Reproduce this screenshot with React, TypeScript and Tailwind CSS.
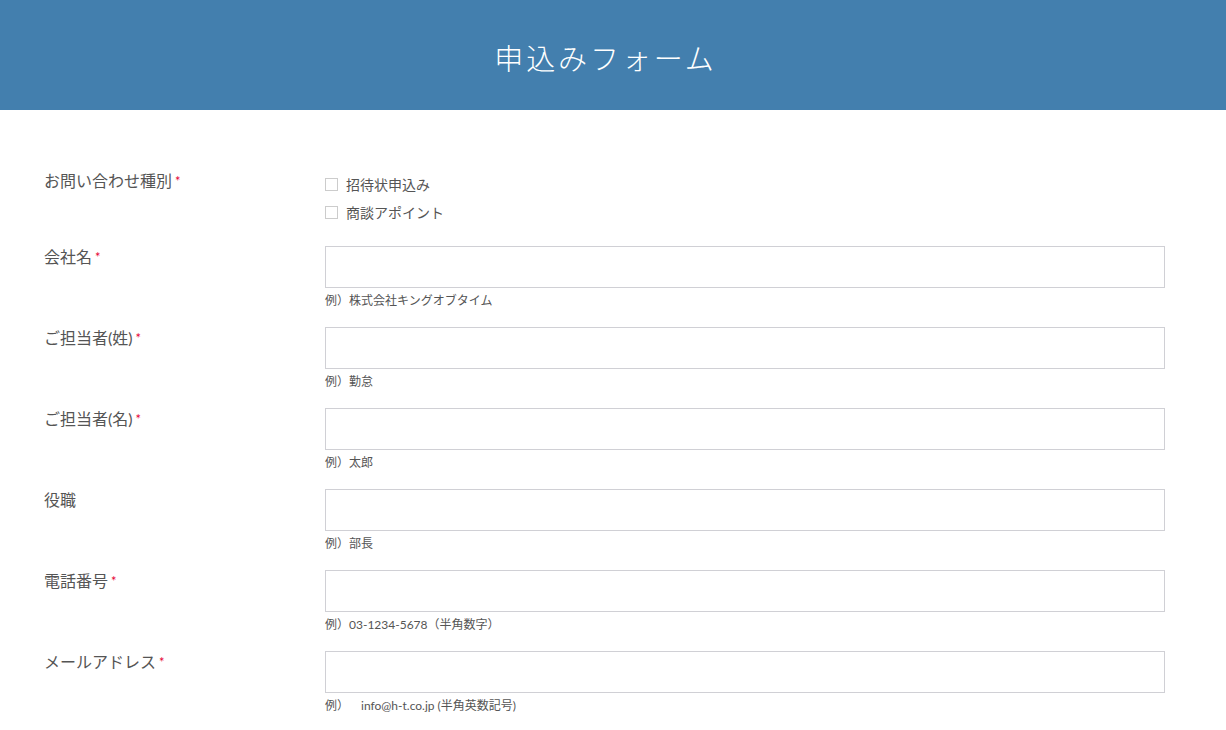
import React from 'react';

const fields = [
  { label: '会社名', required: true, hint: '例）株式会社キングオブタイム' },
  { label: 'ご担当者(姓)', required: true, hint: '例）勤怠' },
  { label: 'ご担当者(名)', required: true, hint: '例）太郎' },
  { label: '役職', required: false, hint: '例）部長' },
  { label: '電話番号', required: true, hint: '例）03-1234-5678（半角数字）' },
];

function Label({ text, required }: { text: string; required: boolean }) {
  return (
    <div className="text-[16px] leading-[22px] text-[#555]">
      {text}
      {required && <span className="ml-[3px] text-[13px] text-[#e60033] align-top">*</span>}
    </div>
  );
}

export default function App() {
  return (
    <div className="min-h-screen bg-white" style={{ fontFamily: 'Lato, "Noto Sans CJK JP", sans-serif' }}>
      {/* header */}
      <header className="h-[110px] bg-[#437fae] flex items-center justify-center pt-[6px] pr-[15px]">
        <h1 className="text-white text-[29px] font-light tracking-[0.1em] leading-none">申込みフォーム</h1>
      </header>

      <div className="pl-[44px] pr-[61px] pt-[60px]">
        {/* type */}
        <div className="grid grid-cols-[281px_1fr] pb-[20px]">
          <Label text="お問い合わせ種別" required />
          <div className="flex flex-col">
            {['招待状申込み', '商談アポイント'].map((opt) => (
              <label key={opt} className="flex items-center gap-[8px] h-[28px] text-[14px] text-[#555]">
                <span className="w-[13px] h-[13px] border border-[#ccc] bg-white" />
                {opt}
              </label>
            ))}
          </div>
        </div>

        {fields.map((f) => (
          <div key={f.label} className="grid grid-cols-[281px_1fr] pb-[17px]">
            <Label text={f.label} required={f.required} />
            <div>
              <input className="block w-full h-[42px] border border-[#d0d0d5] bg-white outline-none" />
              <div className="mt-[4px] text-[12px] leading-[18px] text-[#555]">{f.hint}</div>
            </div>
          </div>
        ))}

        <div className="grid grid-cols-[281px_1fr] pb-[17px]">
          <Label text="メールアドレス" required />
          <div>
            <input className="block w-full h-[42px] border border-[#d0d0d5] bg-white outline-none" />
            <div className="mt-[4px] text-[12px] leading-[18px] text-[#555]">
              例）<span className="ml-[12px]">info@h-t.co.jp (半角英数記号)</span>
            </div>
          </div>
        </div>
      </div>
    </div>
  );
}
